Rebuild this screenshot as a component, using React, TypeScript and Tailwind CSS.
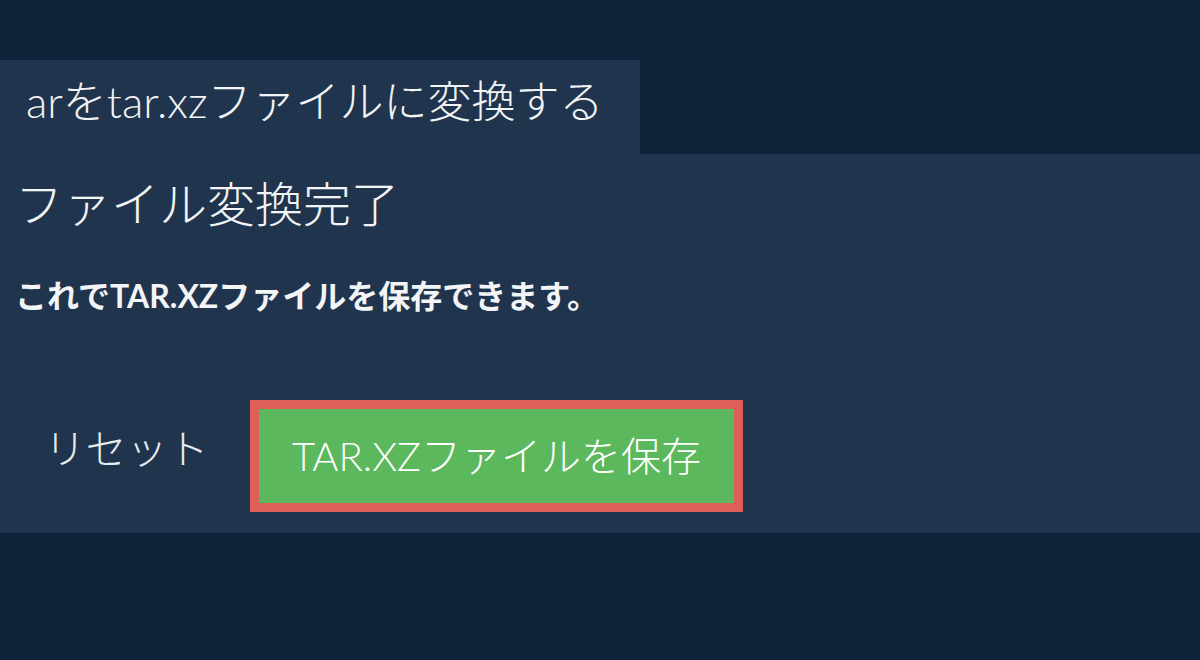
import React from 'react';

const font = "font-['Lato','Noto_Sans_CJK_JP',sans-serif]";

export default function App() {
  return (
    <div className={`w-[1200px] h-[660px] bg-[#0e2239] pt-[60px] text-[#f2f4f6] ${font}`}>
      {/* Tab header */}
      <div className="w-[640px] h-[94px] bg-[#20354d] flex items-center pl-[26px] pb-[13px]">
        <h1 className="text-[44px] font-light leading-none">arをtar.xzファイルに変換する</h1>
      </div>

      {/* Result panel */}
      <div className="h-[379px] bg-[#20354d] px-[15px] pt-[26px]">
        <h2 className="text-[48px] font-light leading-[48px]">ファイル変換完了</h2>
        <p className="mt-[52px] text-[32px] font-bold leading-[32px]">
          これでTAR.XZファイルを保存できます。
        </p>

        <div className="mt-[88px] flex items-start">
          <button className="w-[235px] h-[98px] flex items-center justify-center pr-[12px] text-[41px] font-light text-[#e8ebee]">
            リセット
          </button>
          <button className="w-[493px] h-[112px] border-[9px] border-[#dc5f5a] bg-[#5cb85c] flex items-center justify-center text-[40px] font-light text-white">
            TAR.XZファイルを保存
          </button>
        </div>
      </div>
    </div>
  );
}
